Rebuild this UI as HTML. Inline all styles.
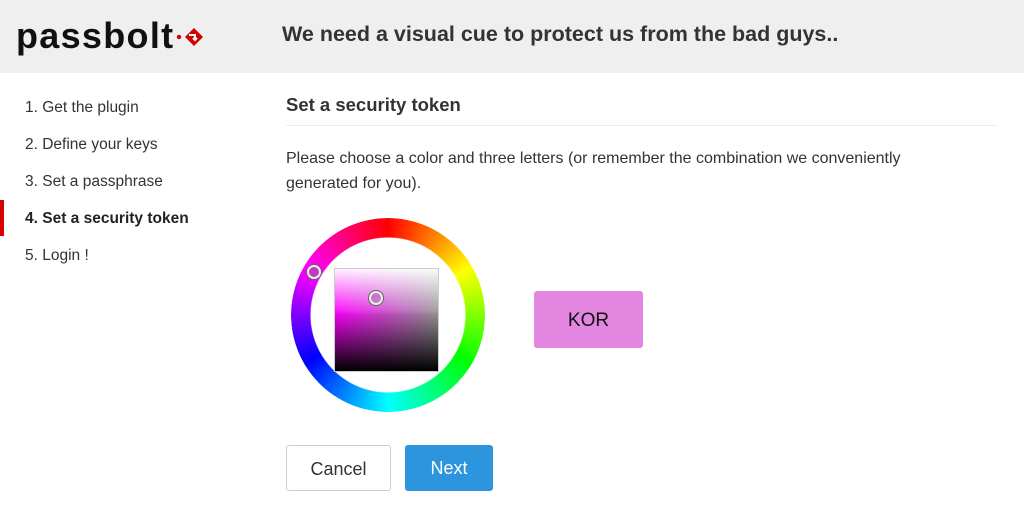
<!DOCTYPE html>
<html><head><style>
body{margin:0;width:1024px;height:530px;background:#fff;font-family:"Liberation Sans",sans-serif;color:#222;position:relative;overflow:hidden}
.hdr{position:absolute;left:0;top:0;width:1024px;height:73px;background:#efefef}
.logo{position:absolute;left:16px;top:15px;font-size:36px;font-weight:bold;color:#111;letter-spacing:1.3px}
.title{position:absolute;left:282px;top:22px;font-size:21.5px;font-weight:bold;color:#333}
.nav{position:absolute;left:25px;top:99px;font-size:15.5px;color:#333}
.nav div{height:37px}
.bar{position:absolute;left:0;top:200px;width:4px;height:36px;background:#d40101}
h2{position:absolute;left:286px;top:94px;margin:0;font-size:18.5px;color:#333}
.rule{position:absolute;left:286px;top:125px;width:712px;height:1px;background:#eee}
.p{position:absolute;left:286px;top:146px;width:690px;font-size:16px;line-height:25px;color:#333}
.wheel{position:absolute;left:291px;top:218px;width:194px;height:194px;border-radius:50%;background:conic-gradient(red,#ff0 60deg,#0f0 120deg,#0ff 180deg,#00f 240deg,#f0f 300deg,red);-webkit-mask:radial-gradient(circle,transparent 77px,#000 78px);mask:radial-gradient(circle,transparent 77px,#000 78px)}
.sq{position:absolute;left:334px;top:268px;width:105px;height:104px;background:linear-gradient(to bottom,rgba(255,255,255,.95),rgba(255,255,255,0) 45%),linear-gradient(to bottom,rgba(0,0,0,0) 40%,#000),linear-gradient(to right,#f0f,#999);border:1px solid #ccc;box-sizing:border-box}
.dot{position:absolute;width:10px;height:10px;border-radius:50%;border:2px solid #eee;box-shadow:0 0 0 1px #666}
.kor{position:absolute;left:534px;top:291px;width:109px;height:57px;background:#e386e0;border-radius:3px;font-size:19px;text-align:center;line-height:60px;color:#111}
.btn{position:absolute;top:445px;height:46px;border-radius:3px;font-size:18px;line-height:46px;text-align:center;box-sizing:border-box}
</style></head><body>
<div class="hdr"></div>
<div class="logo">passbolt<svg width="30" height="30" viewBox="0 0 30 30" style="vertical-align:-3px;margin-left:2px"><circle cx="3" cy="16" r="2.2" fill="#d40101"/><path d="M9 16 L18 7 L27 16 L18 25 Z" fill="#d40101"/><path d="M13 14 L19 14 L19 19 M17 17 L19 19 L21 17" stroke="#fff" stroke-width="2" fill="none"/></svg></div>
<div class="title">We need a visual cue to protect us from the bad guys..</div>
<div class="bar"></div>
<div class="nav"><div>1. Get the plugin</div><div>2. Define your keys</div><div>3. Set a passphrase</div><div style="font-weight:bold;color:#222">4. Set a security token</div><div>5. Login !</div></div>
<h2>Set a security token</h2>
<div class="rule"></div>
<div class="p">Please choose a color and three letters (or remember the combination we conveniently generated for you).</div>
<div class="wheel"></div>
<div class="sq"></div>
<div class="dot" style="left:307px;top:265px;background:#c03ac0"></div>
<div class="dot" style="left:369px;top:291px;background:#c878c8"></div>
<div class="kor">KOR</div>
<div class="btn" style="left:286px;width:105px;border:1px solid #ccc;color:#333">Cancel</div>
<div class="btn" style="left:405px;width:88px;background:#2d95de;color:#fff">Next</div>
</body></html>
